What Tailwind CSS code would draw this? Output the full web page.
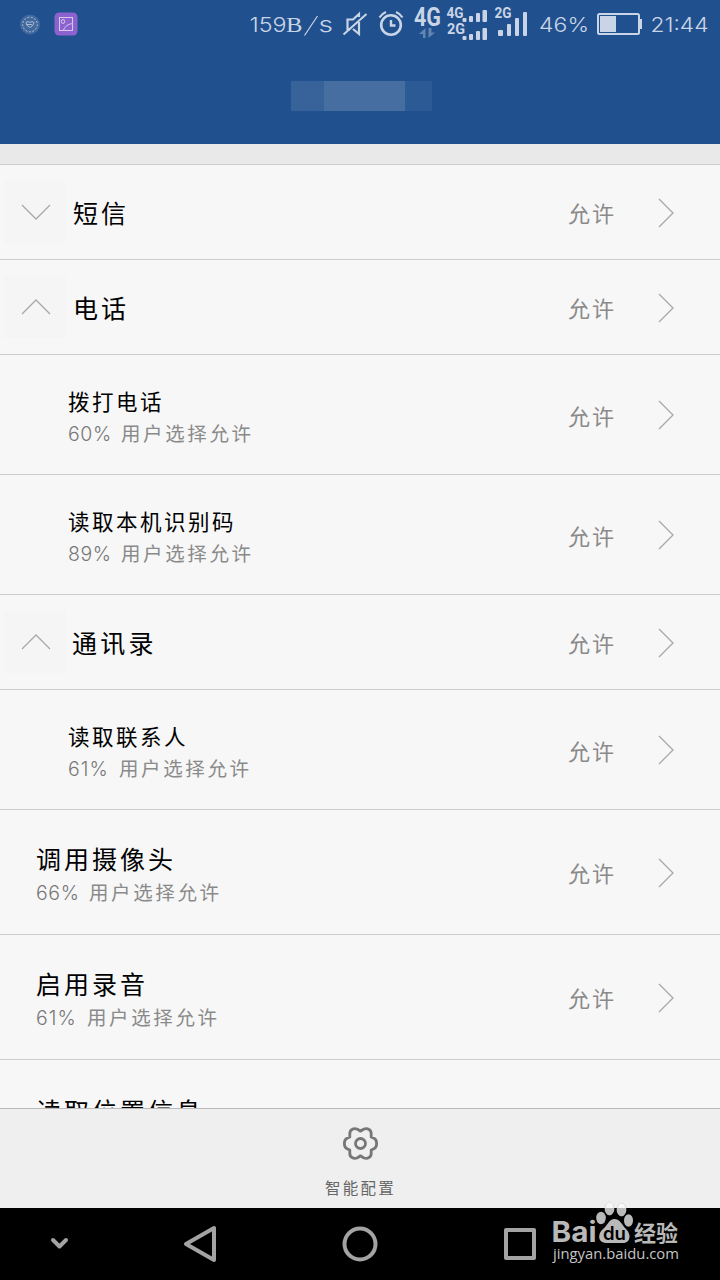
<!DOCTYPE html>
<html lang="zh-CN">
<head>
  <meta charset="UTF-8" />
  <meta name="viewport" content="width=device-width, initial-scale=1.0"/>
  <title>权限管理</title>
  <script src="https://cdn.jsdelivr.net/npm/@tailwindcss/browser@4"></script>
</head>
<body class="bg-black font-['Inter','Noto_Sans_CJK_SC',sans-serif] font-light">
  <svg class="hidden">
    <symbol id="right" viewBox="0 0 16 30"><path d="M1 1L15 15L1 29" fill="none" stroke="#a8a8a8" stroke-width="1.3"/></symbol>
    <symbol id="down" viewBox="0 0 30 16"><path d="M1 1L15 15L29 1" fill="none" stroke="#a8a8a8" stroke-width="1.3"/></symbol>
    <symbol id="up" viewBox="0 0 30 16"><path d="M1 15L15 1L29 15" fill="none" stroke="#a8a8a8" stroke-width="1.3"/></symbol>
  </svg>

  <div class="relative w-[720px] h-[1280px] overflow-hidden flex flex-col">
    <!-- status bar + title -->
    <header class="h-36 shrink-0 bg-[#20508d]">
      <div class="h-12 flex">
        <svg class="w-[249px] h-12 shrink-0" viewBox="0 0 249 48" fill="none">
          <circle cx="30" cy="24.500" r="10" fill="#41699d"/>
          <circle cx="30" cy="24.500" r="7.300" stroke="#b4c4da" stroke-dasharray="2 1.500"/>
          <path d="M26 22.500q2-2 4 0q2-2 4 0q0 3-4 5q-4-2-4-5M26 24.500h6" stroke="#a9bbd4"/>
          <rect x="54.500" y="12.500" width="23" height="23" rx="4.500" fill="#8b62d0"/>
          <rect x="59.500" y="17.500" width="13" height="13" stroke="#d5cbea"/>
          <ellipse cx="63" cy="21.500" rx="1.700" ry="2" stroke="#d5cbea"/>
          <path d="M63.500 30q2-5.500 9-6.500" stroke="#d5cbea"/>
        </svg>
        <svg class="w-[86px] h-12 shrink-0" viewBox="249 0 86 48" fill="#c9d5e6">
          <text x="249.500" y="32" font-size="20.500" textLength="37" lengthAdjust="spacingAndGlyphs">159</text>
          <text x="286" y="32" font-size="20.500" font-family="Liberation Serif" font-weight="400" textLength="16.500" lengthAdjust="spacingAndGlyphs">B</text>
          <path d="M304.500 35.500L317.500 16" stroke="#c9d5e6" stroke-width="1.200"/>
          <text x="318.500" y="32" font-size="22" textLength="14.500" lengthAdjust="spacingAndGlyphs">s</text>
        </svg>
        <svg class="w-[202px] h-12 shrink-0" viewBox="335 0 202 48" fill="none" stroke="#c9d5e6">
          <path d="M349 28V29.500H347.500V19.500H353L359 14V17M353 29L359 34V22" stroke-width="2.200"/>
          <path d="M343.500 34.500L366.500 14" stroke-width="2"/>
          <circle cx="391" cy="25" r="9.800" stroke-width="2.600"/>
          <path d="M391 20V25.500H395.500" stroke-width="2.400"/>
          <path d="M379.500 17.500Q382 13.500 386 12M402.500 17.500Q400 13.500 396 12" stroke-width="2.200"/>
          <g fill="#c9d5e6" stroke="none" font-family="Roboto" font-weight="700">
            <text x="414" y="26" font-size="25" textLength="27" lengthAdjust="spacingAndGlyphs">4G</text>
            <text x="446.500" y="18" font-size="14" textLength="17" lengthAdjust="spacingAndGlyphs">4G</text>
            <text x="447" y="34" font-size="14" textLength="18" lengthAdjust="spacingAndGlyphs">2G</text>
            <text x="494.500" y="18" font-size="14" textLength="17" lengthAdjust="spacingAndGlyphs">2G</text>
            <path d="M425.500 28V38H423V34H419ZM428.500 28V38L435 32.500H431.500V28Z" fill="#6385b2"/>
            <rect x="462.500" y="18" width="4" height="4" rx="1"/>
            <rect x="469" y="16" width="4" height="6" rx="1"/>
            <rect x="476" y="13" width="4" height="9" rx="1"/>
            <rect x="482.500" y="10" width="4.500" height="12" rx="1"/>
            <rect x="462.500" y="36" width="4" height="4" rx="1"/>
            <rect x="469" y="34" width="4" height="6" rx="1"/>
            <rect x="476" y="31" width="4" height="9" rx="1"/>
            <rect x="482.500" y="28" width="4.500" height="12" rx="1"/>
            <rect x="498" y="30" width="5" height="6" rx="1"/>
            <rect x="507" y="24" width="4" height="12" rx="1"/>
            <rect x="515" y="18" width="4" height="18" rx="1"/>
            <rect x="523" y="12" width="4" height="24" rx="1"/>
          </g>
        </svg>
        <svg class="w-[183px] h-12 shrink-0" viewBox="537 0 183 48" fill="#c9d5e6">
          <text x="539" y="32" font-size="20.500" textLength="50" lengthAdjust="spacingAndGlyphs">46%</text>
          <rect x="598" y="14" width="41" height="20" rx="1.500" fill="none" stroke="#c9d5e6" stroke-width="2"/>
          <rect x="600" y="16" width="16" height="16"/>
          <rect x="639" y="19" width="3" height="10"/>
          <text x="650.500" y="32" font-size="20.500" textLength="58" lengthAdjust="spacingAndGlyphs">21:44</text>
        </svg>
      </div>
      <div class="flex justify-center h-[30px] mt-[33px] pl-[3px]">
        <div class="w-[33px] bg-[#38639a]"></div>
        <div class="w-[81px] bg-[#466ea1]"></div>
        <div class="w-[27px] bg-[#2c5a94]"></div>
      </div>
    </header>

    <main class="h-[964px] shrink-0 overflow-hidden bg-[#f7f7f7] text-black">
      <div class="h-[21px] bg-[#e9e9e9] border-b border-[#cdcdcd]"></div>

      <div class="h-[95px] flex items-center border-b border-[#cdcdcd] pl-1 pr-[46px]">
        <div class="size-[62px] bg-[#f5f5f5] flex items-center justify-center pl-[2px]"><svg class="w-[30px] h-4"><use href="#down"/></svg></div>
        <h2 class="pl-[7px] pt-[6px] flex-1 text-[25px] tracking-[3px] font-normal">短信</h2>
        <span class="pt-[5px] w-[90px] text-[22px] tracking-[2px] font-normal text-[#8a8a8a]">允许</span>
        <svg class="w-4 h-[30px] mt-[2px]"><use href="#right"/></svg>
      </div>

      <div class="h-[95px] flex items-center border-b border-[#cdcdcd] pl-1 pr-[46px]">
        <div class="size-[62px] bg-[#f5f5f5] flex items-center justify-center pl-[2px]"><svg class="w-[30px] h-4"><use href="#up"/></svg></div>
        <h2 class="pl-[7px] pt-[6px] flex-1 text-[25px] tracking-[3px] font-normal">电话</h2>
        <span class="pt-[5px] w-[90px] text-[22px] tracking-[2px] font-normal text-[#8a8a8a]">允许</span>
        <svg class="w-4 h-[30px] mt-[2px]"><use href="#right"/></svg>
      </div>

      <div class="h-[120px] flex items-center border-b border-[#cdcdcd] pl-[68px] pr-[46px]">
        <div class="flex-1 pt-[6px]">
          <h3 class="h-[31px] leading-[30px] text-[21.5px] tracking-[2.5px] font-normal">拨打电话</h3>
          <p class="h-[31px] leading-[32px] flex text-[19.5px] text-[#8a8a8a]"><span class="w-[53px] text-[#777] tracking-[.6px]">60%</span><span class="tracking-[2.6px] font-normal">用户选择允许</span></p>
        </div>
        <span class="pt-[5px] w-[90px] text-[22px] tracking-[2px] font-normal text-[#8a8a8a]">允许</span>
        <svg class="w-4 h-[30px]"><use href="#right"/></svg>
      </div>

      <div class="h-[120px] flex items-center border-b border-[#cdcdcd] pl-[68px] pr-[46px]">
        <div class="flex-1 pt-[6px]">
          <h3 class="h-[31px] leading-[30px] text-[21.5px] tracking-[2.5px] font-normal">读取本机识别码</h3>
          <p class="h-[31px] leading-[32px] flex text-[19.5px] text-[#8a8a8a]"><span class="w-[53px] text-[#777] tracking-[.6px]">89%</span><span class="tracking-[2.6px] font-normal">用户选择允许</span></p>
        </div>
        <span class="pt-[5px] w-[90px] text-[22px] tracking-[2px] font-normal text-[#8a8a8a]">允许</span>
        <svg class="w-4 h-[30px]"><use href="#right"/></svg>
      </div>

      <div class="h-[95px] flex items-center border-b border-[#cdcdcd] pl-1 pr-[46px]">
        <div class="size-[62px] bg-[#f5f5f5] flex items-center justify-center pl-[2px]"><svg class="w-[30px] h-4"><use href="#up"/></svg></div>
        <h2 class="pl-[6px] pt-[6px] flex-1 text-[25px] tracking-[3.2px] font-normal">通讯录</h2>
        <span class="pt-[5px] w-[90px] text-[22px] tracking-[2px] font-normal text-[#8a8a8a]">允许</span>
        <svg class="w-4 h-[30px] mt-[2px]"><use href="#right"/></svg>
      </div>

      <div class="h-[120px] flex items-center border-b border-[#cdcdcd] pl-[68px] pr-[46px]">
        <div class="flex-1 pt-[6px]">
          <h3 class="h-[31px] leading-[30px] text-[21.5px] tracking-[2.5px] font-normal">读取联系人</h3>
          <p class="h-[31px] leading-[32px] flex text-[19.5px] text-[#8a8a8a]"><span class="w-[51px] text-[#777] tracking-[1px]">61%</span><span class="tracking-[2.6px] font-normal">用户选择允许</span></p>
        </div>
        <span class="pt-[5px] w-[90px] text-[22px] tracking-[2px] font-normal text-[#8a8a8a]">允许</span>
        <svg class="w-4 h-[30px]"><use href="#right"/></svg>
      </div>

      <div class="h-[125px] flex items-center border-b border-[#cdcdcd] pl-[36px] pr-[46px]">
        <div class="flex-1 pt-[8px]">
          <h2 class="h-[33px] leading-[33px] text-[25px] tracking-[3px] font-normal">调用摄像头</h2>
          <p class="h-[31px] leading-[33px] flex text-[19.5px] text-[#8a8a8a]"><span class="w-[53px] text-[#777] tracking-[.6px]">66%</span><span class="tracking-[2.6px] font-normal">用户选择允许</span></p>
        </div>
        <span class="pt-[4px] w-[90px] text-[22px] tracking-[2px] font-normal text-[#8a8a8a]">允许</span>
        <svg class="w-4 h-[30px] mt-[2px]"><use href="#right"/></svg>
      </div>

      <div class="h-[125px] flex items-center border-b border-[#cdcdcd] pl-[36px] pr-[46px]">
        <div class="flex-1 pt-[8px]">
          <h2 class="h-[33px] leading-[33px] text-[25px] tracking-[3px] font-normal">启用录音</h2>
          <p class="h-[31px] leading-[33px] flex text-[19.5px] text-[#8a8a8a]"><span class="w-[51px] text-[#777] tracking-[1px]">61%</span><span class="tracking-[2.6px] font-normal">用户选择允许</span></p>
        </div>
        <span class="pt-[4px] w-[90px] text-[22px] tracking-[2px] font-normal text-[#8a8a8a]">允许</span>
        <svg class="w-4 h-[30px] mt-[2px]"><use href="#right"/></svg>
      </div>

      <div class="h-[125px] pl-[36px] pt-[36px]">
        <h2 class="h-[33px] leading-[33px] text-[25px] tracking-[3px] font-normal">读取位置信息</h2>
      </div>
    </main>

    <footer class="h-[100px] shrink-0 bg-[#efefef] border-t border-[#bababa] flex flex-col items-center">
      <svg class="w-10 h-10 mt-[15px]" viewBox="-20.500 -19.500 40 40" fill="none" stroke="#777" stroke-width="2.800" stroke-linejoin="round">
        <path d="M0-12.300L3-14.200C7-16 11-13.500 10.700-9.500V-6.500L13.500-5.200C17-3.500 17 3.500 13.500 5.200L10.700 6.500V9.500C11 13.500 7 16 3 14.200L0 12.300L-3 14.200C-7 16-11 13.500-10.700 9.500V6.500L-13.500 5.200C-17 3.500-17-3.500-13.500-5.200L-10.700-6.500V-9.500C-11-13.500-7-16-3-14.200Z"/>
        <circle r="5"/>
      </svg>
      <span class="mt-[13px] leading-6 text-[15.5px] tracking-[2.2px] pl-[1px] font-normal text-[#666]">智能配置</span>
    </footer>

    <nav class="h-[72px] shrink-0 bg-black">
      <svg class="w-[720px] h-[72px]" viewBox="0 1208 720 72" fill="none" stroke="#a3a3a3" stroke-width="4" stroke-linejoin="round">
        <path d="M53 1240L59.500 1246.500L66 1240" stroke-linecap="round"/>
        <path d="M214 1228V1260L186 1244Z"/>
        <circle cx="360" cy="1244" r="15.500"/>
        <rect x="506" y="1230" width="28" height="28"/>
      </svg>
    </nav>

    <!-- watermark -->
    <svg class="absolute left-[545px] top-[1195px] w-[150px] h-[80px]" viewBox="545 1195 150 80" fill="#b9b9b9">
      <text x="551.500" y="1242" font-family="Inter" font-weight="700" font-size="28.500" textLength="45" lengthAdjust="spacingAndGlyphs">Bai</text>
      <g>
        <ellipse cx="601" cy="1218" rx="4.800" ry="6.200"/>
        <ellipse cx="628.500" cy="1220.500" rx="4.500" ry="6.200"/>
        <ellipse cx="609.500" cy="1208.500" rx="4.500" ry="6.500" fill="#f8f8f8" stroke="#ccc" stroke-width=".6"/>
        <ellipse cx="621.500" cy="1209.500" rx="4.500" ry="6.500" fill="#f8f8f8" stroke="#ccc" stroke-width=".6"/>
        <path d="M605.300 1208h8.400q0 7-4.200 7t-4.200-7M617.300 1208h8.400q0 8-4.200 8t-4.200-8"/>
        <path d="M614.500 1219C620 1219 622 1225 626 1229C632 1235 630 1243 623 1243H606C598 1243 597 1234 603 1229C608 1225 609 1219 614.500 1219Z"/>
      </g>
      <text x="603" y="1239.500" font-family="Inter" font-weight="600" font-size="18" fill="#000" textLength="23" lengthAdjust="spacingAndGlyphs">du</text>
      <text x="634" y="1240.500" font-family="Noto Sans CJK SC" font-weight="700" font-size="22" textLength="44" lengthAdjust="spacingAndGlyphs">经验</text>
      <text x="553" y="1259" font-family="Open Sans" font-weight="500" font-size="15" textLength="126" lengthAdjust="spacingAndGlyphs" fill="#c4c4c4">jingyan.baidu.com</text>
    </svg>
  </div>
</body>
</html>
